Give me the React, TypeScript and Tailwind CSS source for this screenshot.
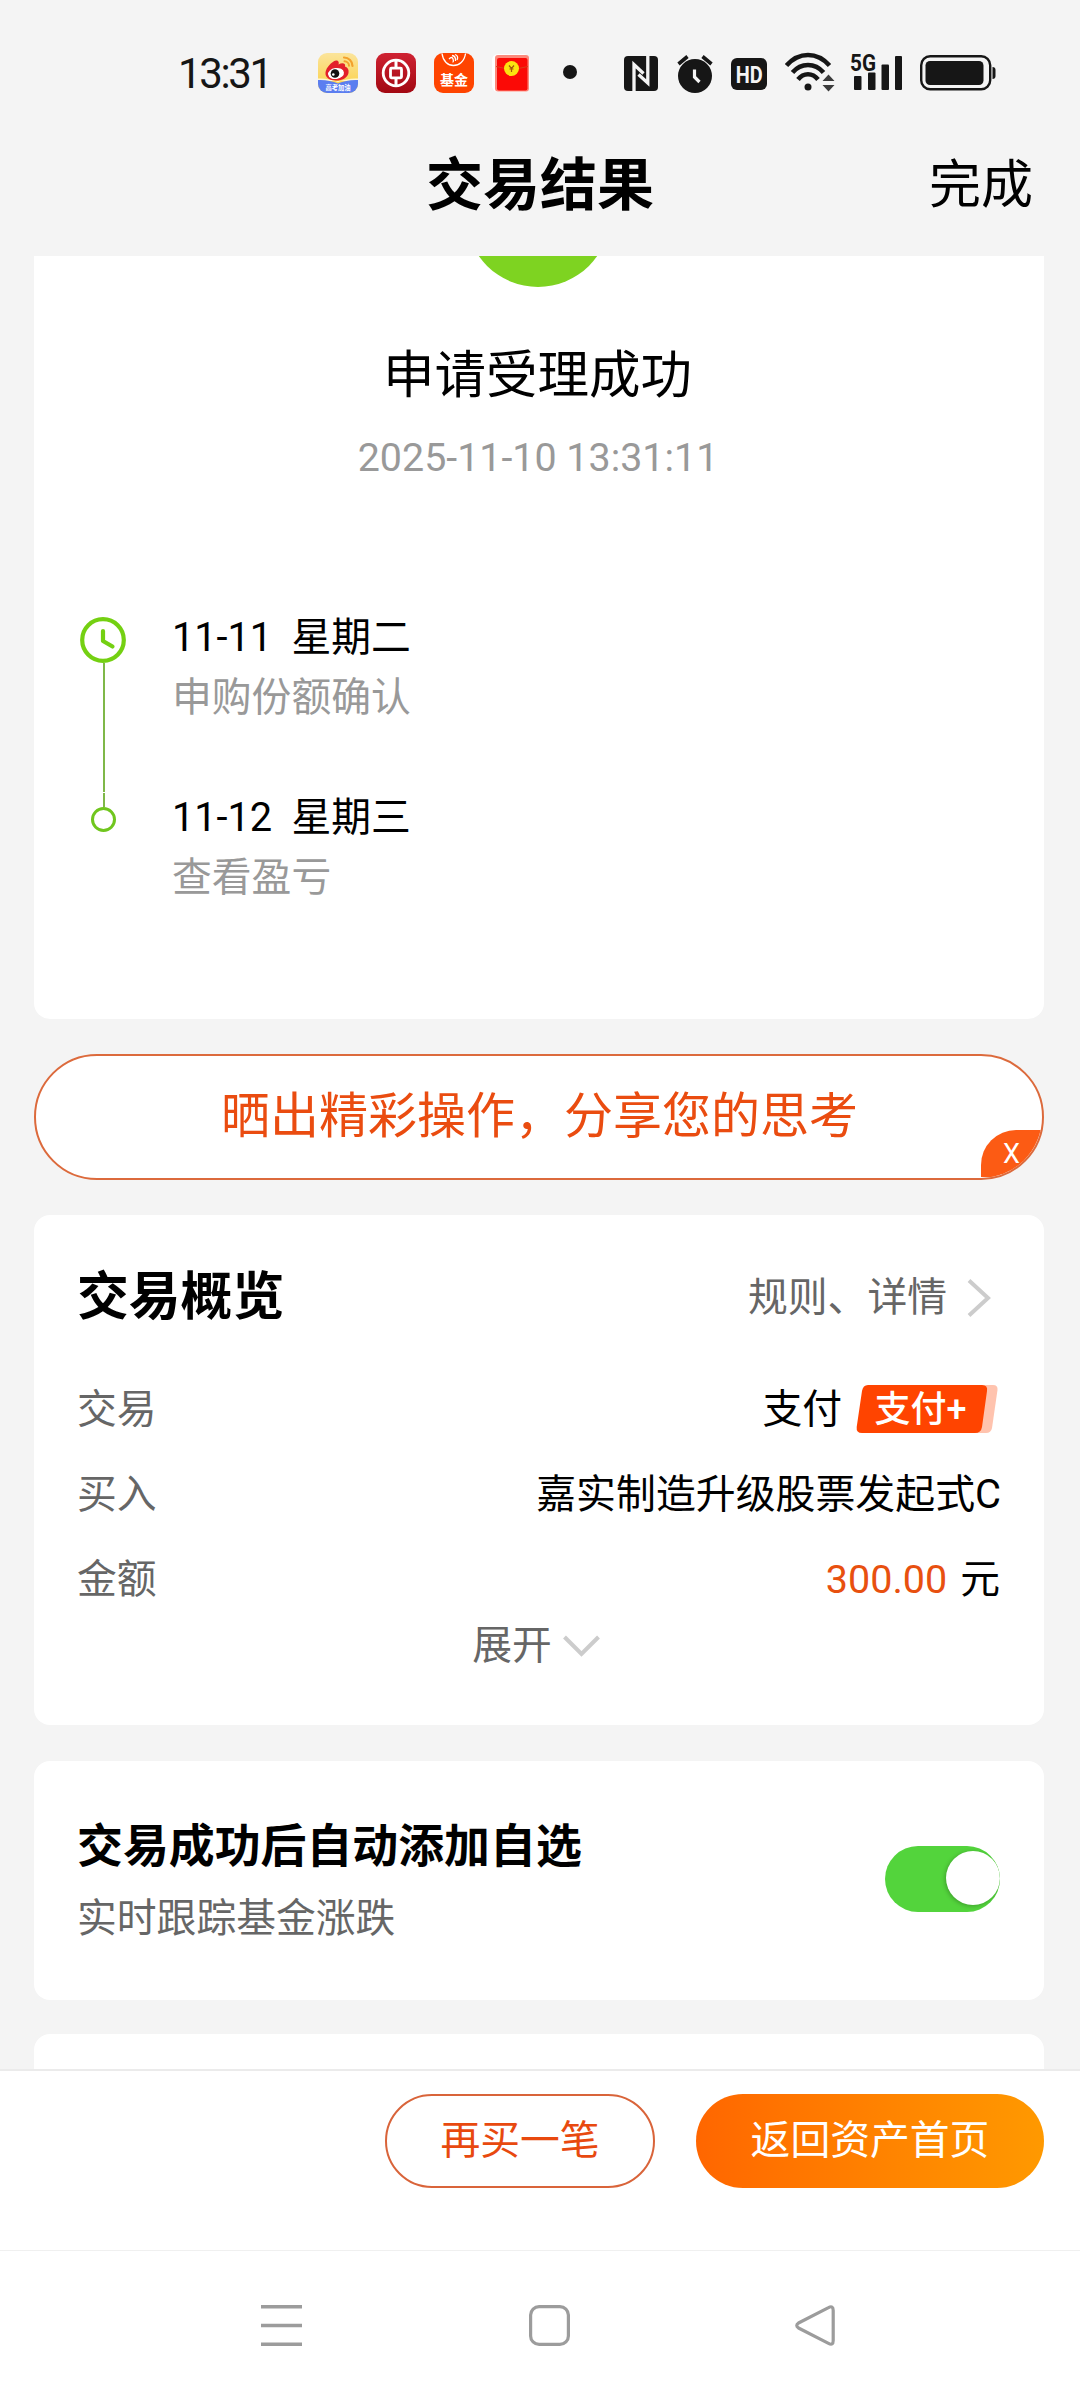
import { useState, type ReactNode } from "react";

const steps = [
  { date: "11-11", weekday: "星期二", note: "申购份额确认" },
  { date: "11-12", weekday: "星期三", note: "查看盈亏" },
];

function WeiboIcon() {
  return (
    <svg width="40" height="40" viewBox="0 0 40 40">
      <defs>
        <clipPath id="weibo-clip">
          <rect width="40" height="40" rx="9" />
        </clipPath>
        <linearGradient id="weibo-bg" x1="0" y1="0" x2="0" y2="1">
          <stop offset="0" stopColor="#fbe49b" />
          <stop offset="1" stopColor="#fbcf3f" />
        </linearGradient>
      </defs>
      <g clipPath="url(#weibo-clip)">
        <rect width="40" height="40" fill="url(#weibo-bg)" />
        <path d="M0 25.5 Q11 25 20 29 Q29 25 40 25.5 V28 H0 Z" fill="#fff6d0" />
        <path d="M0 27 Q11 26.5 20 30.5 Q29 26.5 40 27 V40 H0 Z" fill="#5b7ef0" />
        <path
          d="M18 7.5 C20 7 21.5 9 20.5 11.5 C24 9.5 28 10 27 13.5 C30 14.5 31 17 30.5 20 C29.5 25 24 27.5 18 27.5 C11 27.5 7 24 7.5 19.5 C8 15 13.5 8.5 18 7.5 Z"
          fill="#e3202b"
        />
        <ellipse cx="18" cy="20.5" rx="8" ry="5.5" fill="#fff" transform="rotate(-8 18 20.5)" />
        <circle cx="17" cy="20.5" r="4.3" fill="#111" />
        <circle cx="15.3" cy="21.5" r="1.3" fill="#fff" />
        <path d="M26 4.5 A8.500 8.500 0 0 1 34.5 13" fill="none" stroke="#f3a12c" strokeWidth="2.2" strokeLinecap="round" />
        <path d="M26.5 8.3 A4.500 4.500 0 0 1 31 12.8" fill="none" stroke="#f3a12c" strokeWidth="2" strokeLinecap="round" />
        <text x="20" y="37.3" textAnchor="middle" fontSize="6.3" fontWeight="700" fill="#fff">
          高考加油
        </text>
      </g>
    </svg>
  );
}

function BankIcon() {
  return (
    <svg width="40" height="40" viewBox="0 0 40 40">
      <defs>
        <linearGradient id="bank-bg" x1="0" y1="0" x2="0" y2="1">
          <stop offset="0" stopColor="#cf2232" />
          <stop offset="1" stopColor="#a20812" />
        </linearGradient>
      </defs>
      <rect width="40" height="40" rx="9" fill="url(#bank-bg)" />
      <g fill="none" stroke="#fff">
        <circle cx="20" cy="20" r="12.8" strokeWidth="2.8" />
        <rect x="14.5" y="15.2" width="11" height="9.6" rx="1" strokeWidth="2.8" />
        <path d="M20 7 V14 M20 26 V33" strokeWidth="3" />
      </g>
    </svg>
  );
}

function FundIcon() {
  return (
    <svg width="40" height="40" viewBox="0 0 40 40">
      <rect width="40" height="40" rx="9" fill="#fe4400" />
      <path d="M8 .5 C9 8.5 14 12.5 19.5 12.5 C25 12.5 30.5 8.5 31.5 .5" fill="none" stroke="#fff" strokeWidth="1.3" />
      <path d="M15 6 Q18 3 19 6 T18.5 9 M18 2.5 Q22 3 21.5 8 M21 1.5 Q25 3 23 7" fill="none" stroke="#fff" strokeWidth="1.3" />
      <text x="20" y="31.5" textAnchor="middle" fontSize="14" fontWeight="700" fill="#fff">
        基金
      </text>
    </svg>
  );
}

function RedPacketIcon() {
  return (
    <svg width="38" height="40" viewBox="0 0 38 40">
      <rect x="0" y="1" width="37.5" height="38" rx="6" fill="#fff" />
      <rect x="3" y="2" width="34" height="36.5" rx="3" fill="#fb8a7c" />
      <rect x="5" y="5" width="30.5" height="32.5" rx="2" fill="#fb0a06" />
      <path d="M4 13.5 Q19.5 18 36 13.5" fill="none" stroke="#d8401b" strokeWidth="1" />
      <circle cx="19.5" cy="15.5" r="7.5" fill="#fbe310" />
      <path d="M17 12.5 L19.5 15.5 L22 12.5 M19.5 15.5 V19 M17.5 16 H21.5" fill="none" stroke="#a4570b" strokeWidth="1.2" />
    </svg>
  );
}

function NfcIcon() {
  return (
    <svg width="34" height="35" viewBox="0 0 34 35">
      <rect width="34" height="35" rx="4" fill="#161616" />
      <g fill="none" stroke="#f4f4f4" strokeWidth="3.3">
        <path d="M10 35 V8.5 L19.5 17.5" />
        <path d="M23.8 0 V27 L14.5 18.5" />
      </g>
    </svg>
  );
}

function AlarmIcon() {
  return (
    <svg width="36" height="39" viewBox="0 0 36 39">
      <circle cx="18" cy="22" r="17" fill="#161616" />
      <path d="M1.5 10 L10.5 2.5 M34.5 10 L25.5 2.5" stroke="#161616" strokeWidth="3.6" />
      <path d="M17.5 15.5 V23 L22.5 28" fill="none" stroke="#f4f4f4" strokeWidth="3.2" />
    </svg>
  );
}

function HdIcon() {
  return (
    <svg width="36" height="32" viewBox="0 0 36 32">
      <rect width="36" height="32" rx="6" fill="#161616" />
      <text x="18.3" y="25" textAnchor="middle" fontSize="24" fontWeight="700" fill="#f4f4f4" textLength="27" lengthAdjust="spacingAndGlyphs">
        HD
      </text>
    </svg>
  );
}

function WifiIcon() {
  return (
    <svg width="50" height="40" viewBox="0 0 50 40">
      <g fill="none" stroke="#161616" strokeWidth="4.6">
        <path d="M1.5 13.5 C14 -.5 32 -.5 44.5 13.5" />
        <path d="M7.500 20.5 C16 10.5 30 10.5 38.5 20.5" />
        <path d="M13 27.5 C18.5 20.5 27.5 20.5 33 27.5" />
      </g>
      <circle cx="23" cy="35" r="3.5" fill="#161616" />
      <path d="M43.5 22.5 L49.5 29 H37.5 Z M37.5 33 H49.5 L43.5 39.5 Z" fill="#3c3c3c" />
    </svg>
  );
}

function SignalIcon() {
  return (
    <svg width="53" height="46" viewBox="0 -8 53 46" fill="#161616">
      <text x="0" y="18" fontSize="24" fontWeight="700" textLength="26" lengthAdjust="spacingAndGlyphs">
        5G
      </text>
      <rect x="4" y="23" width="7.5" height="14" rx="1" />
      <rect x="18" y="19.5" width="7.5" height="17.5" rx="1" />
      <rect x="31.5" y="11.5" width="7.5" height="25.5" rx="1" />
      <rect x="45" y="3" width="7" height="34" rx="1" />
    </svg>
  );
}

function BatteryIcon() {
  return (
    <svg width="76" height="36" viewBox="0 0 76 36">
      <rect x="1.2" y="1.2" width="69" height="33" rx="9" fill="none" stroke="#161616" strokeWidth="2.4" />
      <rect x="5.5" y="6" width="58" height="24" rx="4.5" fill="#161616" />
      <path d="M72.5 12 Q75.500 12 75.5 15 V21 Q75.5 24 72.5 24 Z" fill="#161616" />
    </svg>
  );
}

function StatusBar() {
  return (
    <div className="flex h-[116px] shrink-0 pt-[52px] pl-[178px]">
      <span className="mt-px w-[140px] text-[42px] leading-[42px] tracking-[-2.4px] text-[#161616]">13:31</span>
      <div className="mt-px flex gap-[18px]">
        <WeiboIcon />
        <BankIcon />
        <FundIcon />
        <RedPacketIcon />
      </div>
      <span className="mt-[13px] ml-[33px] size-[14px] rounded-full bg-[#161616]" />
      <div className="ml-[47px] flex">
        <div className="mt-1">
          <NfcIcon />
        </div>
        <div className="ml-[19px] mt-[2px]">
          <AlarmIcon />
        </div>
        <div className="mt-[6px] ml-[18px]">
          <HdIcon />
        </div>
        <div className="ml-[18px]">
          <WifiIcon />
        </div>
        <div className="-mt-[7px] ml-[15px]">
          <SignalIcon />
        </div>
        <div className="mt-[3px] ml-[17px]">
          <BatteryIcon />
        </div>
      </div>
    </div>
  );
}

function Row({ label, children }: { label: string; children: ReactNode }) {
  return (
    <div className="flex h-[70px] items-center justify-between">
      <span className="text-[#666]">{label}</span>
      <div className="flex items-center">{children}</div>
    </div>
  );
}

function PayBadge() {
  return (
    <svg width="142" height="48" viewBox="0 0 142 48" className="mr-[2px] mb-[3px] ml-[14px]">
      <path d="M20 0 H137 Q142 0 141.5 5 L136 43 Q135 48 130 48 H20 Z" fill="#ffc3ae" />
      <path d="M12 0 H126 Q132 0 131 6 L126 42 Q125 48 119 48 H6 Q0 48 .7 42 L6 6 Q7 0 12 0 Z" fill="#ff4400" />
      <text x="18.5" y="37" fontSize="36" fontWeight="500" fill="#fff">
        支付+
      </text>
    </svg>
  );
}

function Timeline() {
  return (
    <div className="mt-[120px] flex pl-[46px]">
      {/* Rail */}
      <div className="flex w-[47px] flex-col items-center pt-[9px]">
        <svg width="46" height="46" viewBox="0 0 46 46" fill="none" stroke="#74d012" className="self-start">
          <circle cx="23" cy="23" r="20.8" strokeWidth="4.2" />
          <path d="M23 14 V24 L32.5 29.5" strokeWidth="4.2" strokeLinecap="round" strokeLinejoin="round" />
        </svg>
        <span className="h-[129px] w-[2px] bg-[#7fb848]" />
        <span className="mt-px h-[14px] w-[2px] bg-[#7fb848]" />
        <span className="size-[25px] rounded-full border-[3px] border-[#70c61e]" />
      </div>
      <div className="ml-[45px] flex flex-col gap-[60px]">
        {steps.map((step) => (
          <div key={step.date} className="leading-[60px]">
            <p className="whitespace-pre tracking-[-0.1px]">{`${step.date}  ${step.weekday}`}</p>
            <p className="text-[#999]">{step.note}</p>
          </div>
        ))}
      </div>
    </div>
  );
}

export default function App() {
  const [autoAdd, setAutoAdd] = useState(true);

  return (
    <div className="flex h-[2400px] w-[1080px] flex-col overflow-hidden bg-[#f4f4f4] font-[Roboto,'Noto_Sans_CJK_SC',sans-serif] text-[39.8px] text-black">
      <StatusBar />

      {/* Header */}
      <header className="grid h-[140px] shrink-0 grid-cols-[1fr_auto_1fr] items-center px-[47px]">
        <span />
        <h1 className="text-[57px] font-bold">交易结果</h1>
        <span className="text-right text-[52px]">完成</span>
      </header>

      <main className="flex flex-1 flex-col overflow-hidden pr-9 pl-[34px]">
        {/* Result */}
        <section className="h-[763px] shrink-0 overflow-hidden rounded-b-2xl bg-white">
          <div className="mx-auto -mt-[113px] size-36 -translate-x-px rounded-full bg-[#7ed321]" />
          <h2 className="mt-[53px] pr-[3px] text-center text-[51.5px] leading-[72px]">申请受理成功</h2>
          <p className="mt-4 pr-[2px] text-center text-[39.4px] leading-[60px] text-[#999]">2025-11-10 13:31:11</p>
          <Timeline />
        </section>

        {/* Share */}
        <button className="relative mt-[35px] h-[126px] shrink-0 overflow-hidden rounded-full border-2 border-[#dc6a3c] bg-white pl-px text-[49px] text-[#ea4c10]">
          晒出精彩操作，分享您的思考
          <span className="absolute right-0 bottom-[1px] flex h-[47px] w-[61px] items-center rounded-tl-[35px] bg-[#fc5b14] pt-[2px] pl-[22px] text-[27px] text-white">
            X
          </span>
        </button>

        {/* Overview */}
        <section className="mt-[35px] h-[510px] shrink-0 rounded-2xl bg-white pt-[47px] pr-11 pl-[43px]">
          <div className="flex h-[72px] items-center justify-between">
            <h3 className="text-[51.8px] font-bold">交易概览</h3>
            <div className="flex items-center pr-[8px] text-[#666]">
              规则、详情
              <svg width="25" height="38" viewBox="0 0 25 38" fill="none" stroke="#ccc" strokeWidth="4" className="ml-5">
                <path d="M2 1.5 L21 19 L2 36.5" />
              </svg>
            </div>
          </div>
          <div className="mt-[41px] flex flex-col gap-[15px]">
            <Row label="交易">
              支付
              <PayBadge />
            </Row>
            <Row label="买入">
              <span className="-mr-px text-[39.9px]">嘉实制造升级股票发起式C</span>
            </Row>
            <Row label="金额">
              <span className="mr-[13px] text-[39.5px] text-[#e8500f]">300.00</span>元
            </Row>
          </div>
          <div className="mt-px flex h-[60px] items-center justify-center pr-[5px] text-[#666]">
            展开
            <svg width="37" height="22" viewBox="0 0 37 22" fill="none" stroke="#ccc" strokeWidth="4" className="ml-[11px]">
              <path d="M1.5 2 L18.5 19 L35.5 2" />
            </svg>
          </div>
        </section>

        {/* Auto add */}
        <section className="mt-9 flex h-[239px] shrink-0 items-center justify-between rounded-2xl bg-white pr-11 pl-[43px]">
          <div className="pt-[5px]">
            <h3 className="text-[45.9px] leading-[72px] font-bold">交易成功后自动添加自选</h3>
            <p className="leading-[74px] text-[#666]">实时跟踪基金涨跌</p>
          </div>
          <button
            onClick={() => setAutoAdd(!autoAdd)}
            className={`mb-1 flex h-[66px] w-[115px] items-center overflow-hidden rounded-full pb-[2px] ${
              autoAdd ? "justify-end bg-[#53d43c]" : "justify-start bg-[#ddd]"
            }`}
          >
            <span className="size-[54px] rounded-full bg-white shadow-[-1px_1px_4px_rgba(0,0,0,0.25)]" />
          </button>
        </section>

        <section className="mt-[34px] h-[200px] shrink-0 rounded-2xl bg-white" />
      </main>

      {/* Actions */}
      <footer className="flex h-[181px] shrink-0 justify-end gap-[41px] border-t-2 border-[#ebebeb] bg-white pt-[23px] pr-9">
        <button className="h-[94px] w-[270px] rounded-full border-2 border-[#d9643a] text-[#e8490f]">再买一笔</button>
        <button className="h-[94px] w-[348px] rounded-full bg-linear-to-r from-[#ff6600] to-[#ff9900] text-white">返回资产首页</button>
      </footer>

      {/* System navigation */}
      <nav className="flex h-[150px] shrink-0 border-t border-[#f0f0f0] bg-white pt-[54px] pl-[261px]">
        <svg width="41" height="41" viewBox="0 0 41 41" stroke="#9c9c9c" strokeWidth="3.6">
          <path d="M0 1.8 H41 M0 20.5 H41 M0 39.2 H41" />
        </svg>
        <svg width="41" height="41" viewBox="0 0 41 41" fill="none" stroke="#9c9c9c" strokeWidth="3.2" className="ml-[227px]">
          <rect x="1.6" y="1.6" width="37.8" height="37.8" rx="8.5" />
        </svg>
        <svg width="41" height="41" viewBox="0 0 41 41" fill="none" stroke="#9c9c9c" strokeWidth="3.2" className="ml-[225px]">
          <path d="M33.5 2.6 Q38.2 0 38.2 5.5 V35.5 Q38.2 41 33.5 38.4 L3.5 23 Q0 20.5 3.5 18 Z" strokeLinejoin="round" />
        </svg>
      </nav>
    </div>
  );
}
